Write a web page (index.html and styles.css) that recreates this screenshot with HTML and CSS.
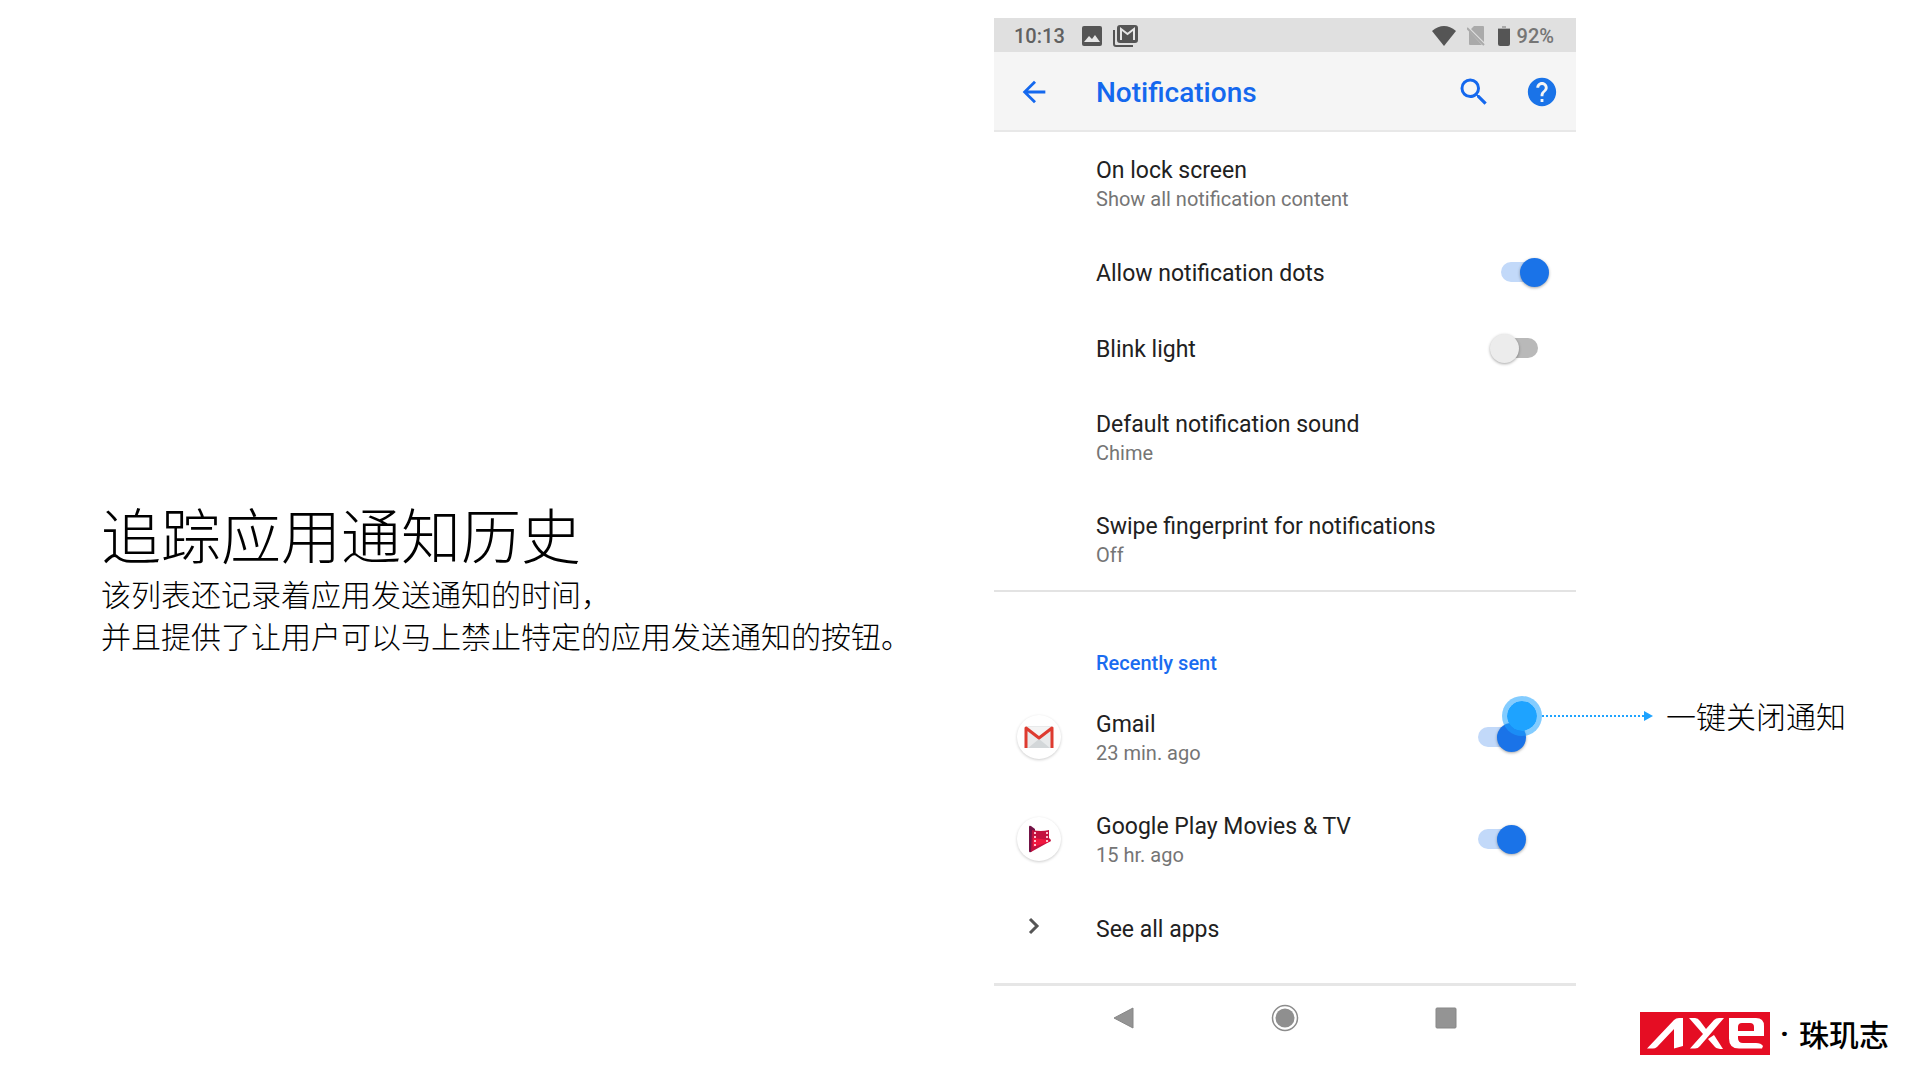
FILE: index.html
```html
<!DOCTYPE html>
<html lang="zh-CN">
<head>
<meta charset="UTF-8" />
<meta name="viewport" content="width=device-width, initial-scale=1" />
<title>追踪应用通知历史</title>
<link rel="stylesheet" href="styles.css">
</head>
<body>

<main class="slide">
  <section class="intro">
    <h1>追踪应用通知历史</h1>
    <p>该列表还记录着应用发送通知的时间，<br>并且提供了让用户可以马上禁止特定的应用发送通知的按钮。</p>
  </section>

  <section class="phone" lang="en">
    <!-- Status bar -->
    <div class="status-bar">
      <span class="clock">10:13</span>
      <svg class="status-photo" viewBox="0 0 20 20" width="20" height="20"><path fill="#555" d="M2 0h16a2 2 0 0 1 2 2v16a2 2 0 0 1-2 2H2a2 2 0 0 1-2-2V2a2 2 0 0 1 2-2z"/><path fill="#e6e6e6" d="M2 16l5-6 3 3 3-4 5 7z"/></svg>
      <svg viewBox="0 0 26 22" width="26" height="22"><path fill="none" stroke="#555" stroke-width="2" d="M1 5v14q0 2 2 2h17"/><rect x="5" y="1" width="19" height="16" rx="2" fill="#555" stroke="#555" stroke-width="2"/><path fill="none" stroke="#e6e6e6" stroke-width="2" d="M8 15V4l6.500 5L21 4v11"/></svg>
      <span class="status-right">
        <svg viewBox="0 0 24 20" width="24" height="20"><path fill="#555" d="M0 5Q12-5 24 5L12 20z"/></svg>
        <svg class="status-sim" viewBox="0 0 18 20" width="18" height="20"><path fill="#aaa" d="M7 0h9q1 0 1 1v15L4 3zM2 5l13 14H3q-1 0-1-1z"/><path stroke="#aaa" stroke-width="2" d="M0 2l17 17"/></svg>
        <svg class="status-battery" viewBox="0 0 12 20" width="12" height="20"><path fill="#aaa" d="M4 0h4v2h4v3H0V2h4z"/><path fill="#555" d="M0 3h12v15q0 2-2 2H2q-2 0-2-2z"/></svg>
        <span>92%</span>
      </span>
    </div>

    <!-- App bar -->
    <header class="app-bar">
      <button class="icon-btn back-btn" aria-label="Back"><svg viewBox="0 0 24 24" width="34" height="34"><path fill="#1468ee" d="M20 11H7.830l5.590-5.590L12 4l-8 8 8 8 1.410-1.410L7.830 13H20v-2z"/></svg></button>
      <h2>Notifications</h2>
      <button class="icon-btn" aria-label="Search"><svg viewBox="0 0 24 24" width="36" height="36"><path fill="#1468ee" d="M15.500 14h-.79l-.28-.27A6.470 6.470 0 0 0 16 9.500 6.500 6.500 0 1 0 9.500 16c1.610 0 3.090-.59 4.230-1.570l.27.28v.79l5 4.990L20.490 19l-4.990-5zm-6 0C7.010 14 5 11.990 5 9.500S7.010 5 9.500 5 14 7.010 14 9.500 11.990 14 9.500 14z"/></svg></button>
      <button class="icon-btn" aria-label="Help"><svg viewBox="0 0 24 24" width="34" height="34"><path fill="#1a73e8" d="M12 2C6.480 2 2 6.480 2 12s4.480 10 10 10 10-4.480 10-10S17.520 2 12 2zm1 17h-2v-2h2v2zm2.070-7.750l-.9.920C13.450 12.900 13 13.500 13 15h-2v-.5c0-1.100.45-2.100 1.170-2.830l1.240-1.260c.37-.36.59-.86.59-1.410 0-1.100-.9-2-2-2s-2 .9-2 2H8c0-2.210 1.790-4 4-4s4 1.790 4 4c0 .88-.36 1.680-.93 2.250z"/></svg></button>
    </header>

    <!-- Settings -->
    <div class="settings">
      <a class="row" href="#lock">
        <span class="row-text"><span class="row-title">On lock screen</span><span class="row-sub">Show all notification content</span></span>
      </a>
      <label class="row row-single">
        <span class="row-text"><span class="row-title">Allow notification dots</span></span>
        <input class="switch" type="checkbox" checked>
      </label>
      <label class="row row-single">
        <span class="row-text"><span class="row-title">Blink light</span></span>
        <input class="switch" type="checkbox">
      </label>
      <a class="row" href="#sound">
        <span class="row-text"><span class="row-title">Default notification sound</span><span class="row-sub">Chime</span></span>
      </a>
      <a class="row" href="#fingerprint">
        <span class="row-text"><span class="row-title">Swipe fingerprint for notifications</span><span class="row-sub">Off</span></span>
      </a>
    </div>

    <!-- Recently sent -->
    <div class="recent">
      <h3>Recently sent</h3>
      <div class="app-row">
        <label class="row">
          <span class="row-icon"><span class="app-icon"><svg viewBox="0 0 30 22" width="30" height="22"><path fill="#e8eaeb" d="M2 0h26v22H2z"/><path fill="#d3d7d9" d="M4 22l11-9 11 9z"/><path fill="#f4f4f4" d="M4 1h22L15 11z"/><path fill="none" stroke="#de3b30" stroke-width="3" stroke-linejoin="round" d="M2 22V2l13 10L28 2v20"/></svg></span></span>
          <span class="row-text"><span class="row-title">Gmail</span><span class="row-sub">23 min. ago</span></span>
          <input class="switch" type="checkbox" checked>
        </label>
        <!-- Callout over the switch -->
        <div class="callout" lang="zh-CN">
          <span class="callout-dot"></span>
          <span class="callout-line"></span>
          <span class="callout-arrow"></span>
          <span class="callout-text">一键关闭通知</span>
        </div>
      </div>
      <div class="app-row">
        <label class="row">
          <span class="row-icon"><span class="app-icon"><svg viewBox="0 0 26 28" width="26" height="28"><path fill="#731346" d="M3 2q0-2 2-1l4 3v18l-4 5q-2 1-2-1z"/><path fill="#c3123f" d="M6 5q9 2 17 0v8l2 2q0 2-2 2L5 27z"/><path fill="#f0183f" d="M7 13l16 2v2L7 22z"/><path stroke="#ffc2cf" stroke-width="2" stroke-dasharray="2 2" d="M9 7v14M21 7v10"/></svg></span></span>
          <span class="row-text"><span class="row-title">Google Play Movies &amp; TV</span><span class="row-sub">15 hr. ago</span></span>
          <input class="switch" type="checkbox" checked>
        </label>
      </div>
      <a class="row row-single" href="#apps">
        <span class="row-icon row-chevron"><svg viewBox="0 0 12 18" width="12" height="18"><path fill="none" stroke="#555" stroke-width="3" d="M2 2l7 7-7 7"/></svg></span>
        <span class="row-text"><span class="row-title">See all apps</span></span>
      </a>
    </div>

    <!-- System navigation -->
    <nav class="nav-bar">
      <button class="icon-btn" aria-label="Back"><svg viewBox="0 0 22 24" width="22" height="24"><path fill="#949494" stroke="#878787" stroke-linejoin="round" d="M1 12L20 2v20z"/></svg></button>
      <button class="icon-btn" aria-label="Home"><svg viewBox="0 0 28 28" width="28" height="28"><circle cx="14" cy="14" r="12.500" fill="none" stroke="#8c8c8c" stroke-width="1.500"/><circle cx="14" cy="14" r="9.500" fill="#8f8f8f"/></svg></button>
      <button class="icon-btn" aria-label="Overview"><svg viewBox="0 0 22 22" width="22" height="22"><rect x="1" y="1" width="20" height="20" rx="1" fill="#949494" stroke="#878787"/></svg></button>
    </nav>
  </section>

  <footer class="brand">
    <svg viewBox="0 0 130 43" width="130" height="43" role="img" aria-label="AXE">
      <path fill="#e50d23" d="M0 0h130v43H0z"/>
      <g fill="#fff">
        <path d="M7 36.500L34 8q2-2 5-2h4v28l-9 2.500V17L17 35q-2 1.500-4 1.500z"/>
        <path d="M49 6h6q3 0 5 3l6 8 8-9q2-2 5-2h5L60 34q-2 2.500-5 2.500h-5L63 22z"/>
        <path d="M68 27l6-4 9 14q-6 0-8-2z"/>
        <path fill-rule="evenodd" d="M89 6h27q8 0 8 8v10H98v2q0 5 5 5h13q5 0 7 3l-1 2.500H99q-10 0-10-10zm9 13h16v-4q0-4-4-4h-8q-4 0-4 4z"/>
      </g>
    </svg>
    <span class="brand-dot">·</span>
    <span>珠玑志</span>
  </footer>
</main>

</body>
</html>
```
FILE: styles.css
```css
* {
  box-sizing: border-box;
  margin: 0; padding: 0;
}
body {
  font-family: Roboto, "Noto Sans CJK SC", sans-serif;
  background: #fff;
  color: #000;
}
.slide {
  min-height: 100vh;
  display: grid;
  grid-template-columns: 994fr 582fr 334fr;
  grid-template-rows: 1fr auto;
  align-items: start;
  padding-top: 18px;
}

/* Left text */
.intro {
  grid-row: 1 / 3;
  align-self: center;
  padding: 62px 0 0 101px;
  font-family: "Noto Sans CJK SC", sans-serif;
  font-weight: 300;
}
.intro h1 {
  font-size: 60px;
  line-height: 78px;
  font-weight: 300;
}
.intro p {
  font-size: 30px;
  line-height: 42px;
  white-space: nowrap;
}

/* Phone */
.phone {
  grid-row: 1 / 3;
  grid-column: 2;
}
.status-bar {
  height: 34px;
  padding: 1px 22px 0 20px;
  display: flex;
  align-items: center;
  gap: 11px;
  background: #e0e0e0;
  color: #616161;
  font-size: 20px;
  font-weight: 500;
}
.status-photo {
  margin-left: 6px;
}
.status-right {
  margin-left: auto;
  display: flex;
  align-items: center;
}
.status-right span {
  color: #757575;
}
.status-sim {
  margin: 0 13px 0 11px;
}
.status-battery {
  margin-right: 7px;
}
.app-bar {
  height: 80px;
  padding: 2px 17px 0 23px;
  display: flex;
  align-items: center;
  gap: 33px;
  background: #f5f5f5;
  border-bottom: 2px solid #e8e8e8;
}
.app-bar h2 {
  flex: 1;
  color: #1468ee;
  font-size: 28px;
  font-weight: 500;
}
.back-btn {
  margin-right: 12px;
}
.icon-btn {
  display: flex;
  align-items: center;
  justify-content: center;
  background: none;
  border: none;
  cursor: pointer;
}
.settings {
  border-bottom: 2px solid #e3e3e3;
}
.row {
  min-height: 102px;
  padding: 4px 27px 0 102px;
  display: flex;
  align-items: center;
  color: #212121;
  text-decoration: none;
  cursor: pointer;
}
.row-single {
  min-height: 76px;
}
.row-text {
  flex: 1;
  display: flex;
  flex-direction: column;
}
.row-title {
  font-size: 23px;
  line-height: 28px;
}
.row-sub {
  color: #757575;
  font-size: 20px;
  line-height: 28px;
}
.recent {
  padding-bottom: 17px;
  border-bottom: 3px solid #e6e6e6;
}
.recent h3 {
  padding: 57px 0 9px 102px;
  color: #1a6cf0;
  font-size: 20px;
  line-height: 28px;
  font-weight: 500;
}
.app-row {
  position: relative;
}
.recent .row {
  padding-left: 0;
  padding-right: 50px;
}
.row-icon {
  width: 102px;
  padding: 0 0 4px 23px;
}
.row-chevron {
  padding-left: 34px;
}
.app-icon {
  width: 44px;
  height: 44px;
  display: flex;
  align-items: center;
  justify-content: center;
  border-radius: 50%;
  background: #fff;
  box-shadow: 0 1px 3px rgba(0,0,0,0.2);
}

/* Switch */
.switch {
  appearance: none;
  width: 59px;
  height: 30px;
  margin-bottom: 4px;
  display: grid;
  align-items: center;
  cursor: pointer;
}
.switch::before,
.switch::after {
  content: "";
  grid-area: 1 / 1;
}
.switch::before {
  height: 20px;
  margin: 0 11px;
  border-radius: 10px;
  background: #b9b9b9;
}
.switch::after {
  width: 29px;
  height: 29px;
  border-radius: 50%;
  background: #ececec;
  box-shadow: 0 1px 3px rgba(0,0,0,0.35);
}
.switch:checked::before {
  background: #c2d9f9;
}
.switch:checked::after {
  justify-self: end;
  background: #1a73e8;
}

/* Callout */
.callout {
  position: absolute;
  left: 508px;
  top: 10px;
  display: flex;
  align-items: center;
  white-space: nowrap;
  pointer-events: none;
}
.callout-dot {
  width: 40px;
  height: 40px;
  border: 5px solid rgba(30,163,255,0.55);
  border-radius: 50%;
  background: #1ea3ff;
  background-clip: padding-box;
}
.callout-line {
  width: 102px;
  height: 2px;
  background: repeating-linear-gradient(90deg, #1ea3ff 0 2px, transparent 2px 4px);
}
.callout-arrow {
  border: 5px solid transparent;
  border-left: 9px solid #1ea3ff;
  border-right: 0;
}
.callout-text {
  margin-left: 13px;
  padding-bottom: 2px;
  color: #000;
  font-family: "Noto Sans CJK SC", sans-serif;
  font-size: 30px;
  line-height: 38px;
  font-weight: 300;
}

.nav-bar {
  height: 64px;
  padding: 0 49px;
  display: grid;
  grid-template-columns: repeat(3, 1fr);
}

/* Brand */
.brand {
  grid-row: 2;
  grid-column: 3;
  justify-self: end;
  padding: 0 21px 15px 0;
  display: flex;
  align-items: center;
  gap: 10px;
  font-family: "Noto Sans CJK SC", sans-serif;
  font-size: 30px;
  line-height: 43px;
  font-weight: 500;
}
.brand-dot {
  font-family: Roboto, sans-serif;
  font-weight: 700;
}
```
